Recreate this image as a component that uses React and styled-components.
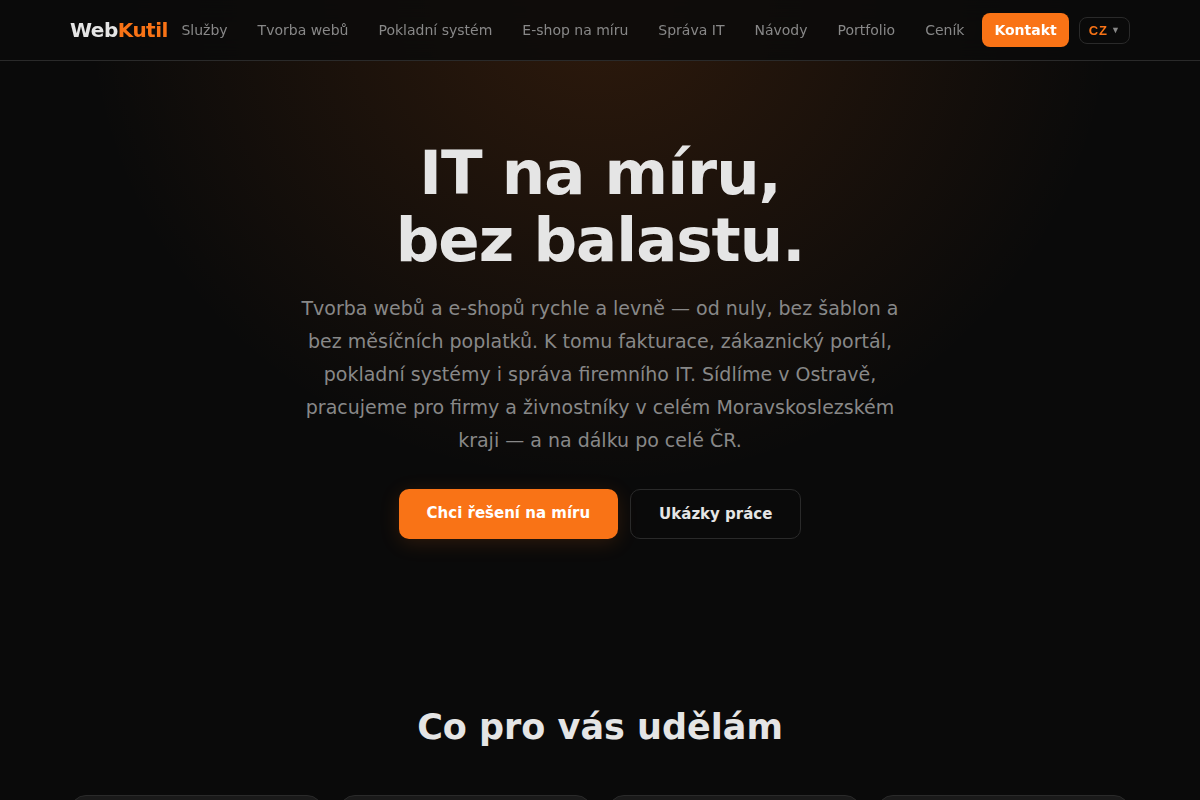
import styled, { createGlobalStyle, css } from 'styled-components';

const navLinks = [
  'Služby',
  'Tvorba webů',
  'Pokladní systém',
  'E-shop na míru',
  'Správa IT',
  'Návody',
  'Portfolio',
  'Ceník',
];

const cards = ['weby', 'eshopy', 'pokladny', 'sprava'];

function App() {
  return (
    <>
      <GlobalStyle />
      <Header>
        <HeaderInner>
          <Logo href="#">Web<span>Kutil</span></Logo>
          <Nav>
            {navLinks.map((label) => (
              <NavLink href="#" key={label}>{label}</NavLink>
            ))}
            <NavLink href="#" $cta>Kontakt</NavLink>
          </Nav>
          <LangButton type="button">
            CZ <Caret>▼</Caret>
          </LangButton>
        </HeaderInner>
      </Header>

      <main>
        <Hero>
          <HeroTitle>IT na míru,<br />bez balastu.</HeroTitle>
          <HeroText>
            Tvorba webů a e-shopů rychle a levně — od nuly, bez šablon a bez měsíčních
            poplatků. K tomu fakturace, zákaznický portál, pokladní systémy i správa
            firemního IT. Sídlíme v Ostravě, pracujeme pro firmy a živnostníky v celém
            Moravskoslezském kraji — a na dálku po celé ČR.
          </HeroText>
          <Actions>
            <Button href="#" $primary>Chci řešení na míru</Button>
            <Button href="#">Ukázky práce</Button>
          </Actions>
        </Hero>

        <Services>
          <SectionTitle>Co pro vás udělám</SectionTitle>
          <CardGrid>
            {cards.map((id) => (
              <Card key={id} />
            ))}
          </CardGrid>
        </Services>
      </main>
    </>
  );
}

export default App;

const GlobalStyle = createGlobalStyle`
  * {
    box-sizing: border-box;
    margin: 0;
    padding: 0;
  }

  html {
    scrollbar-width: none;
  }

  body {
    background: #0a0a0a;
    color: #e5e5e5;
    font-family: 'DejaVu Sans', sans-serif;
    overflow-x: hidden;
  }

  a {
    color: inherit;
    text-decoration: none;
  }
`;

const Header = styled.header`
  position: sticky;
  top: 0;
  z-index: 10;
  background: rgba(10, 10, 10, 0.85);
  backdrop-filter: blur(12px);
  border-bottom: 1px solid #2a2a2a;
`;

const HeaderInner = styled.div`
  display: flex;
  align-items: center;
  max-width: 1100px;
  height: 60px;
  margin: 0 auto;
  padding: 0 20px;
`;

const Logo = styled.a`
  font-size: 20px;
  font-weight: 700;
  letter-spacing: -0.5px;

  span {
    color: #f97316;
  }
`;

const Nav = styled.nav`
  display: flex;
  align-items: center;
  gap: 6px;
  margin-left: auto;
`;

const NavLink = styled.a`
  padding: 8px 12px;
  border-radius: 8px;
  color: #888;
  font-size: 14px;
  line-height: 18px;
  white-space: nowrap;

  ${({ $cta }) => $cta && css`
    background: #f97316;
    color: #fff;
    font-weight: 700;
  `}
`;

const LangButton = styled.button`
  display: flex;
  align-items: center;
  gap: 3px;
  margin-left: 10px;
  padding: 5px 9px;
  border: 1px solid #2a2a2a;
  border-radius: 8px;
  background: transparent;
  color: #f97316;
  font-family: 'Liberation Sans', sans-serif;
  font-size: 13px;
  font-weight: 700;
  line-height: 15px;
  letter-spacing: 1px;
`;

const Caret = styled.span`
  color: #888;
  font-size: 9px;
  letter-spacing: 0;
`;

const Hero = styled.section`
  position: relative;
  padding: 78px 20px 80px;
  text-align: center;

  /* warm glow, reaches up under the translucent header */
  &::before {
    content: '';
    position: absolute;
    inset: -61px 0 0;
    z-index: -1;
    background: radial-gradient(ellipse 515px 485px at 50% 0, rgba(249, 115, 22, 0.15), transparent);
  }
`;

const HeroTitle = styled.h1`
  font-size: 61px;
  font-weight: 700;
  line-height: 67px;
  letter-spacing: -1px;
`;

const HeroText = styled.p`
  max-width: 620px;
  margin: 19px auto 0;
  color: #888;
  font-size: 19px;
  line-height: 33px;
`;

const Actions = styled.div`
  display: flex;
  justify-content: center;
  flex-wrap: wrap;
  gap: 12px;
  margin-top: 32px;
`;

const Button = styled.a`
  padding: 14px 28px;
  border-radius: 10px;
  font-size: 15px;
  font-weight: 700;
  line-height: 20px;

  ${({ $primary }) => $primary ? css`
    background: #f97316;
    color: #fff;
    box-shadow: 0 4px 20px rgba(249, 115, 22, 0.15);
  ` : css`
    border: 1px solid #2a2a2a;
  `}
`;

const Services = styled.section`
  max-width: 1100px;
  margin: 0 auto;
  padding: 85px 20px 80px;
`;

const SectionTitle = styled.h2`
  margin-bottom: 45px;
  font-size: 35px;
  font-weight: 700;
  line-height: 46px;
  text-align: center;
`;

const CardGrid = styled.div`
  display: grid;
  grid-template-columns: repeat(4, 1fr);
  gap: 16px;
`;

const Card = styled.div`
  min-height: 240px;
  border: 1px solid #2a2a2a;
  border-radius: 16px;
  background: #1a1a1a;
`;
